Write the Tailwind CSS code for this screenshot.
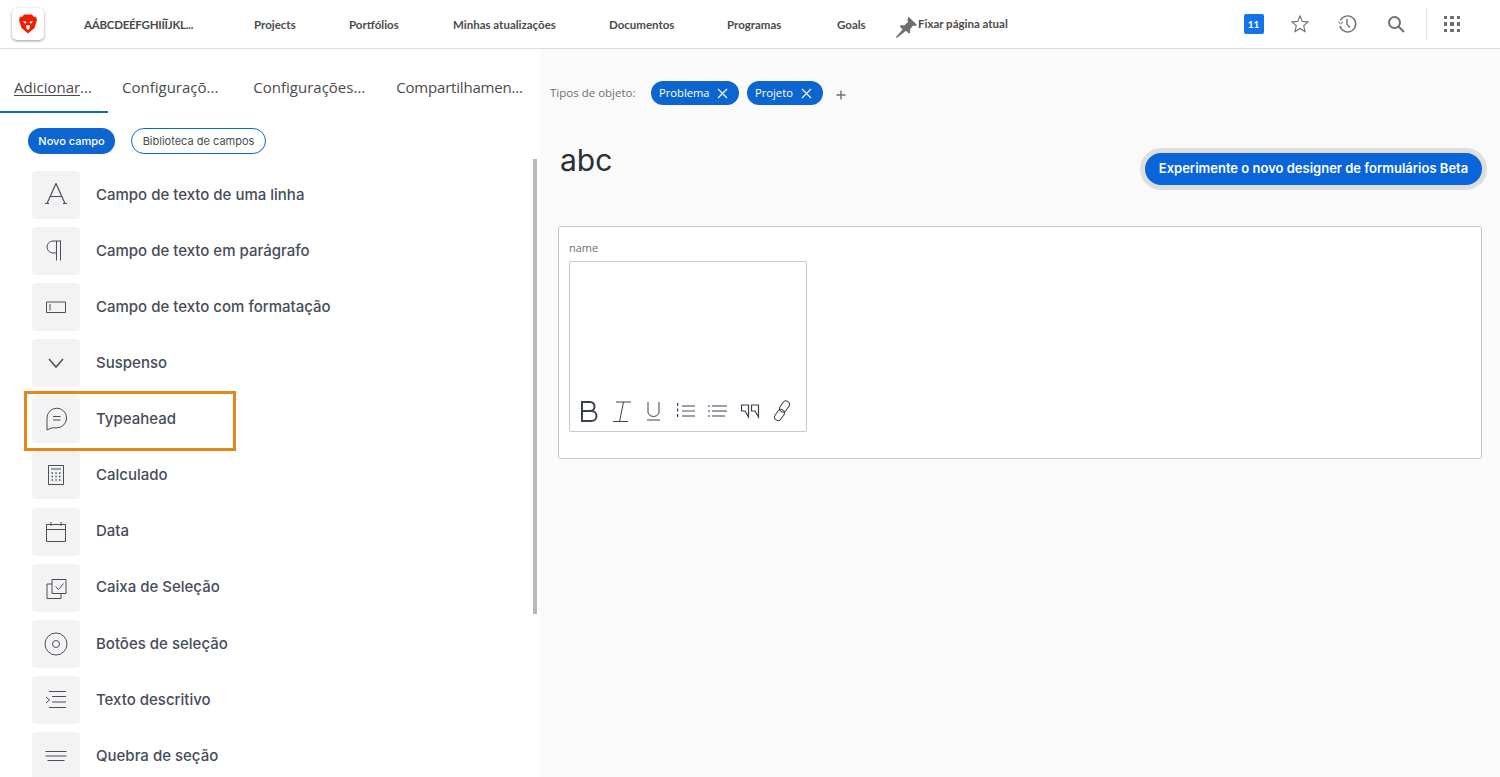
<!DOCTYPE html>
<html lang="en">
<head>
  <meta charset="UTF-8">
  <meta name="viewport" content="width=device-width, initial-scale=1.0">
  <script src="https://cdn.jsdelivr.net/npm/@tailwindcss/browser@4"></script>
  <title>Designer de formulários</title>
</head>
<body class="h-[777px] overflow-hidden bg-white font-['Inter',sans-serif]">
  <!-- Top nav -->
  <header class="h-[49px] flex items-center bg-white border-b border-[#dcdcdc] font-['Lato',sans-serif] text-[#4b4b4b]">
    <div class="ml-3 w-8 h-8 rounded-[5px] bg-white shadow-[0_1px_3px_rgba(0,0,0,0.4)] flex items-center justify-center">
      <svg width="18" height="20" viewBox="0 0 18 20">
        <path d="M5 .5h8l1.500 2 2.500.5 1 3-1 3-1.500 5L9 19.500 2.500 14 1 9 0 6l1-3 2.500-.5z" fill="#f01e00"/>
        <path d="M4 7l3 .5.500 1.500L5.500 9.500zM14 7l-3 .5-.500 1.500 2 .5zM7 11l2 .5 2-.5-.5 3.500L9 16l-1.500-1.500z" fill="#fff"/>
      </svg>
    </div>
    <nav class="ml-10 flex items-center text-[11.500px] font-bold">
      <span class="w-[170px] mt-[1px] tracking-[-0.25px]">AÁBCDEÉFGHIÍĨJKL...</span>
      <span class="w-[95px] mt-[1px]">Projects</span>
      <span class="w-[104px] mt-[1px]">Portfólios</span>
      <span class="w-[156px] mt-[1px]">Minhas atualizações</span>
      <span class="w-[118px] mt-[1px]">Documentos</span>
      <span class="w-[110px] mt-[1px]">Programas</span>
      <span class="w-[58px] mt-[1px]">Goals</span>
      <svg class="w-[23px] mt-[6px] overflow-visible" width="24" height="24" viewBox="0 0 24 24">
        <path d="M14 1l9 9-2 1-2-.5-3.500 4 .5 3-1.500 1.500-3-3L2.500 23 1 23.500l.5-1.500 6.500-7.500-3-3L6.500 10l3 .5 4-3.500-.5-2z" fill="#6e6e6e"/>
      </svg>
      <span class="-mt-[1px]">Fixar página atual</span>
    </nav>
    <div class="ml-auto flex items-center h-full">
      <div class="w-5 h-5 rounded-[2px] bg-[#1473e6] text-white text-[10px] font-bold flex items-center justify-center">11</div>
      <svg class="ml-[26px]" width="20" height="20" viewBox="0 0 20 20" fill="none" stroke="#707070" stroke-width="1.100"><path d="M10 2l2.300 5.400 5.700.5-4.300 3.800 1.300 5.800L10 14.500l-5 3 1.300-5.800L2 7.900l5.700-.5z"/></svg>
      <svg class="ml-[27px]" width="20" height="20" viewBox="0 0 20 20" fill="none" stroke="#707070" stroke-width="1.400"><path d="M3.500 6.500A8 8 0 1 1 3 12"/><path d="M1.500 7.500L3.500 10l2.500-2" stroke-width="1"/><path d="M10 5v5.500l3 3"/></svg>
      <svg class="ml-[29px]" width="20" height="20" viewBox="0 0 20 20" fill="none" stroke="#707070" stroke-width="2"><circle cx="8.500" cy="8.500" r="5.500"/><path d="M12.500 12.500L18 18"/></svg>
      <div class="ml-[20px] w-px h-8 bg-[#e6e6e6]"></div>
      <div class="ml-[17px] mr-[40px] grid grid-cols-3 gap-[3px]">
        <i class="w-[3.500px] h-[3.500px] bg-[#6e6e6e]"></i><i class="w-[3.500px] h-[3.500px] bg-[#6e6e6e]"></i><i class="w-[3.500px] h-[3.500px] bg-[#6e6e6e]"></i>
        <i class="w-[3.500px] h-[3.500px] bg-[#6e6e6e]"></i><i class="w-[3.500px] h-[3.500px] bg-[#6e6e6e]"></i><i class="w-[3.500px] h-[3.500px] bg-[#6e6e6e]"></i>
        <i class="w-[3.500px] h-[3.500px] bg-[#6e6e6e]"></i><i class="w-[3.500px] h-[3.500px] bg-[#6e6e6e]"></i><i class="w-[3.500px] h-[3.500px] bg-[#6e6e6e]"></i>
      </div>
    </div>
  </header>

  <div class="flex h-[728px]">
    <!-- Left panel -->
    <aside class="relative w-[540px] shrink-0 bg-white overflow-hidden">
      <div class="flex h-[64px] font-['Open_Sans',sans-serif] text-[15px] text-[#4b4b4b]">
        <div class="w-[108px] h-[64px] pl-[14px] pt-[27px] border-b-2 border-[#0d66d0]"><span class="underline underline-offset-2">Adicionar</span>...</div>
        <div class="ml-[14px] pt-[27px]">Configuraçõ...</div>
        <div class="ml-[35px] pt-[27px]">Configurações...</div>
        <div class="ml-[31px] pt-[27px] tracking-[-0.2px]">Compartilhamen...</div>
      </div>
      <div class="flex items-center mt-[15px] ml-[28px] gap-[16px] text-[11px]">
        <span class="h-[26px] w-[87px] pt-px rounded-full bg-[#0d66d0] text-white font-medium flex items-center justify-center">Novo campo</span>
        <span class="h-[26px] w-[135px] pt-px rounded-full border border-[#0d66d0] text-[#4b4b4b] flex items-center justify-center">Biblioteca de campos</span>
      </div>
      <div class="absolute left-[533px] top-[110px] w-1 h-[455px] bg-[#b9b9b9]"></div>

      <ul class="mt-[17px] ml-8 flex flex-col gap-[8.100px] text-[15px] font-medium text-[#474b59]">
        <li class="flex items-center gap-4">
          <div class="w-12 h-12 shrink-0 rounded-sm bg-[#f3f3f3] flex items-center justify-center">
            <svg width="24" height="24" viewBox="0 0 24 24" fill="none" stroke="#4a4f5c" stroke-width="1.200"><path d="M1 20.500h4M19 20.500h4M3 20.500L12 .5l9 20M6.500 13.500h11"/></svg>
          </div>Campo de texto de uma linha
        </li>
        <li class="flex items-center gap-4">
          <div class="w-12 h-12 shrink-0 rounded-sm bg-[#f3f3f3] flex items-center justify-center">
            <svg width="24" height="24" viewBox="0 0 24 24" fill="none" stroke="#4a4f5c" stroke-width="1"><path d="M17 2H9a6 6 0 0 0 0 12h3.500M12.500 2v19.500M16.500 2v19.500"/></svg>
          </div>Campo de texto em parágrafo
        </li>
        <li class="flex items-center gap-4">
          <div class="w-12 h-12 shrink-0 rounded-sm bg-[#f3f3f3] flex items-center justify-center">
            <svg width="24" height="24" viewBox="0 0 24 24" fill="none" stroke="#4a4f5c" stroke-width="1"><path d="M2.500 7h19v10.500h-19zM6 9v6.500"/></svg>
          </div>Campo de texto com formatação
        </li>
        <li class="flex items-center gap-4">
          <div class="w-12 h-12 shrink-0 rounded-sm bg-[#f3f3f3] flex items-center justify-center">
            <svg width="24" height="24" viewBox="0 0 24 24" fill="none" stroke="#4a4f5c" stroke-width="1.500"><path d="M5 8l7 8 7-8"/></svg>
          </div>Suspenso
        </li>
        <li class="relative flex items-center gap-4">
          <div class="w-12 h-12 shrink-0 rounded-sm bg-[#f3f3f3] flex items-center justify-center">
            <svg width="24" height="24" viewBox="0 0 24 24" fill="none" stroke="#4a4f5c" stroke-width="1"><path d="M3 23V11a9.800 9.800 0 1 1 9.800 9.800H8zM9 9.500h7.500M9 13h7.500"/></svg>
          </div>Typeahead
          <div class="absolute -left-2 -top-1 w-[212px] h-[60px] border-[3px] border-[#e68619]"></div>
        </li>
        <li class="flex items-center gap-4">
          <div class="w-12 h-12 shrink-0 rounded-sm bg-[#f3f3f3] flex items-center justify-center">
            <svg width="24" height="24" viewBox="0 0 24 24" fill="none" stroke="#4a4f5c" stroke-width="1"><path d="M4.500 2.500h15v19h-15zM7 6h10"/><path d="M7.500 10h1.500M11.300 10h1.500M15 10h1.500M7.500 13.500h1.500M11.300 13.500h1.500M15 13.500h1.500M7.500 17h1.500M11.300 17h1.500M15 17h1.500" stroke-width="1.500"/></svg>
          </div>Calculado
        </li>
        <li class="flex items-center gap-4">
          <div class="w-12 h-12 shrink-0 rounded-sm bg-[#f3f3f3] flex items-center justify-center">
            <svg width="24" height="24" viewBox="0 0 24 24" fill="none" stroke="#4a4f5c" stroke-width="1"><path d="M2.500 4.500h19v17h-19zM2.500 9.500h19M7 2v4M17 2v4"/></svg>
          </div>Data
        </li>
        <li class="flex items-center gap-4">
          <div class="w-12 h-12 shrink-0 rounded-sm bg-[#f3f3f3] flex items-center justify-center">
            <svg width="24" height="24" viewBox="0 0 24 24" fill="none" stroke="#4a4f5c" stroke-width="1"><path d="M8 3.500h14v14H8zM3 8h5M3 8v14.500h14v-5M11.500 10.500l3 3 5-6"/></svg>
          </div>Caixa de Seleção
        </li>
        <li class="flex items-center gap-4">
          <div class="w-12 h-12 shrink-0 rounded-sm bg-[#f3f3f3] flex items-center justify-center">
            <svg width="24" height="24" viewBox="0 0 24 24" fill="none" stroke="#4a4f5c" stroke-width="1"><circle cx="12" cy="12" r="11"/><circle cx="12" cy="12" r="3.500"/></svg>
          </div>Botões de seleção
        </li>
        <li class="flex items-center gap-4">
          <div class="w-12 h-12 shrink-0 rounded-sm bg-[#f3f3f3] flex items-center justify-center">
            <svg width="24" height="24" viewBox="0 0 24 24" fill="none" stroke="#4a4f5c" stroke-width="1"><path d="M5 3.500h17M8 8.500h14M8 14h14M5 19.500h17M2 9l3.500 3L2 15"/></svg>
          </div>Texto descritivo
        </li>
        <li class="flex items-center gap-4">
          <div class="w-12 h-12 shrink-0 rounded-sm bg-[#f3f3f3] flex items-center justify-center">
            <svg width="24" height="24" viewBox="0 0 24 24" fill="none" stroke="#4a4f5c" stroke-width="1"><path d="M1.500 7.500h21M1.500 12h21M3.500 16.500h17"/></svg>
          </div>Quebra de seção
        </li>
      </ul>
    </aside>

    <!-- Right panel -->
    <main class="flex-1 bg-[#fafafa] pl-[10px] pr-[13px]">
      <div class="flex items-center h-[24px] mt-[32px] ml-0 font-['Open_Sans',sans-serif] text-[11.500px]">
        <span class="text-[#6e6e6e] w-[101px]">Tipos de objeto:</span>
        <span class="h-6 w-[88px] pl-2 rounded-full bg-[#0d66d0] text-white text-[11.200px] flex items-center justify-between pr-[11px]">Problema
          <svg width="11" height="11" viewBox="0 0 11 11" stroke="#fff" stroke-width="1.100"><path d="M1 1l9 9M10 1l-9 9"/></svg></span>
        <span class="ml-2 h-6 w-[76px] pl-2 rounded-full bg-[#0d66d0] text-white text-[11.200px] flex items-center justify-between pr-[11px]">Projeto
          <svg width="11" height="11" viewBox="0 0 11 11" stroke="#fff" stroke-width="1.100"><path d="M1 1l9 9M10 1l-9 9"/></svg></span>
        <svg class="ml-[13px] mt-[3px]" width="10" height="10" viewBox="0 0 10 10" stroke="#707070" stroke-width="1.400"><path d="M5 .5v9M.5 5h9"/></svg>
      </div>
      <div class="flex justify-between items-start ml-[10px] mt-[31px]">
        <h1 class="text-[30px] leading-[40px] mt-[4px] text-[#2c2f36]">abc</h1>
        <button class="mt-[12px] h-[42px] w-[347px] rounded-full border-[5px] border-[#dedede] bg-[#0a64da] text-white text-[13px] font-semibold">Experimente o novo designer de formulários Beta</button>
      </div>
      <section class="mt-[36px] ml-2 h-[233px] w-[924px] bg-white border border-[#c8c8c8] rounded-[3px] pt-[14px] pl-[10px]">
        <div class="text-[11px] leading-[14px] text-[#6e6e6e] font-['Open_Sans',sans-serif]">name</div>
        <div class="mt-[6px] h-[171px] w-[238px] border border-[#c8c8c8] rounded-[2px] flex flex-col justify-end pb-[8px] pl-[9px]">
          <div class="flex items-center gap-[11px]">
            <svg width="21" height="24" viewBox="0 0 21 24" fill="none" stroke="#3a4050" stroke-width="2"><path d="M3 3h8a4.500 4.500 0 0 1 0 9H3h9.500a5 5 0 0 1 0 10H3z"/></svg>
            <svg width="21" height="24" viewBox="0 0 21 24" fill="none" stroke="#3a4050" stroke-width="1"><path d="M5 3h15M2 22.500h15M12.500 3l-4 19.500"/></svg>
            <svg width="21" height="24" viewBox="0 0 21 24" fill="none" stroke="#3a4050" stroke-width="1"><path d="M5 3v11a6 6 0 0 0 11 0V3M4 21h13"/></svg>
            <svg width="21" height="24" viewBox="0 0 21 24" fill="none" stroke="#3a4050" stroke-width="1"><path d="M7 7h13M7 17h13"/><path d="M7 12h13" stroke="#8a8e98" stroke-width="1.500"/><path d="M2 5.500h2M2 11h2M2 16.500h2" stroke-width="3" stroke-dasharray="1 .8"/></svg>
            <svg width="21" height="24" viewBox="0 0 21 24" fill="none" stroke="#3a4050" stroke-width="1"><path d="M5 7h15M5 12h15M5 17h13"/><path d="M1 7h2M1 12h2M1 17h2" stroke-width="1.200"/></svg>
            <svg width="21" height="24" viewBox="0 0 21 24" fill="none" stroke="#3a4050" stroke-width="1.200"><path d="M2.500 6h7v12L6 12H2.500zM12.500 6h7v12L16 12h-3.500z"/></svg>
            <svg width="21" height="24" viewBox="0 0 21 24" fill="none" stroke="#3a4050" stroke-width="1"><rect x="10" y="1.500" width="7" height="12" rx="3.500" transform="rotate(35 13.500 7.500)"/><rect x="5" y="10" width="7" height="12" rx="3.500" transform="rotate(35 8.500 16)"/></svg>
          </div>
        </div>
      </section>
    </main>
  </div>
</body>
</html>
